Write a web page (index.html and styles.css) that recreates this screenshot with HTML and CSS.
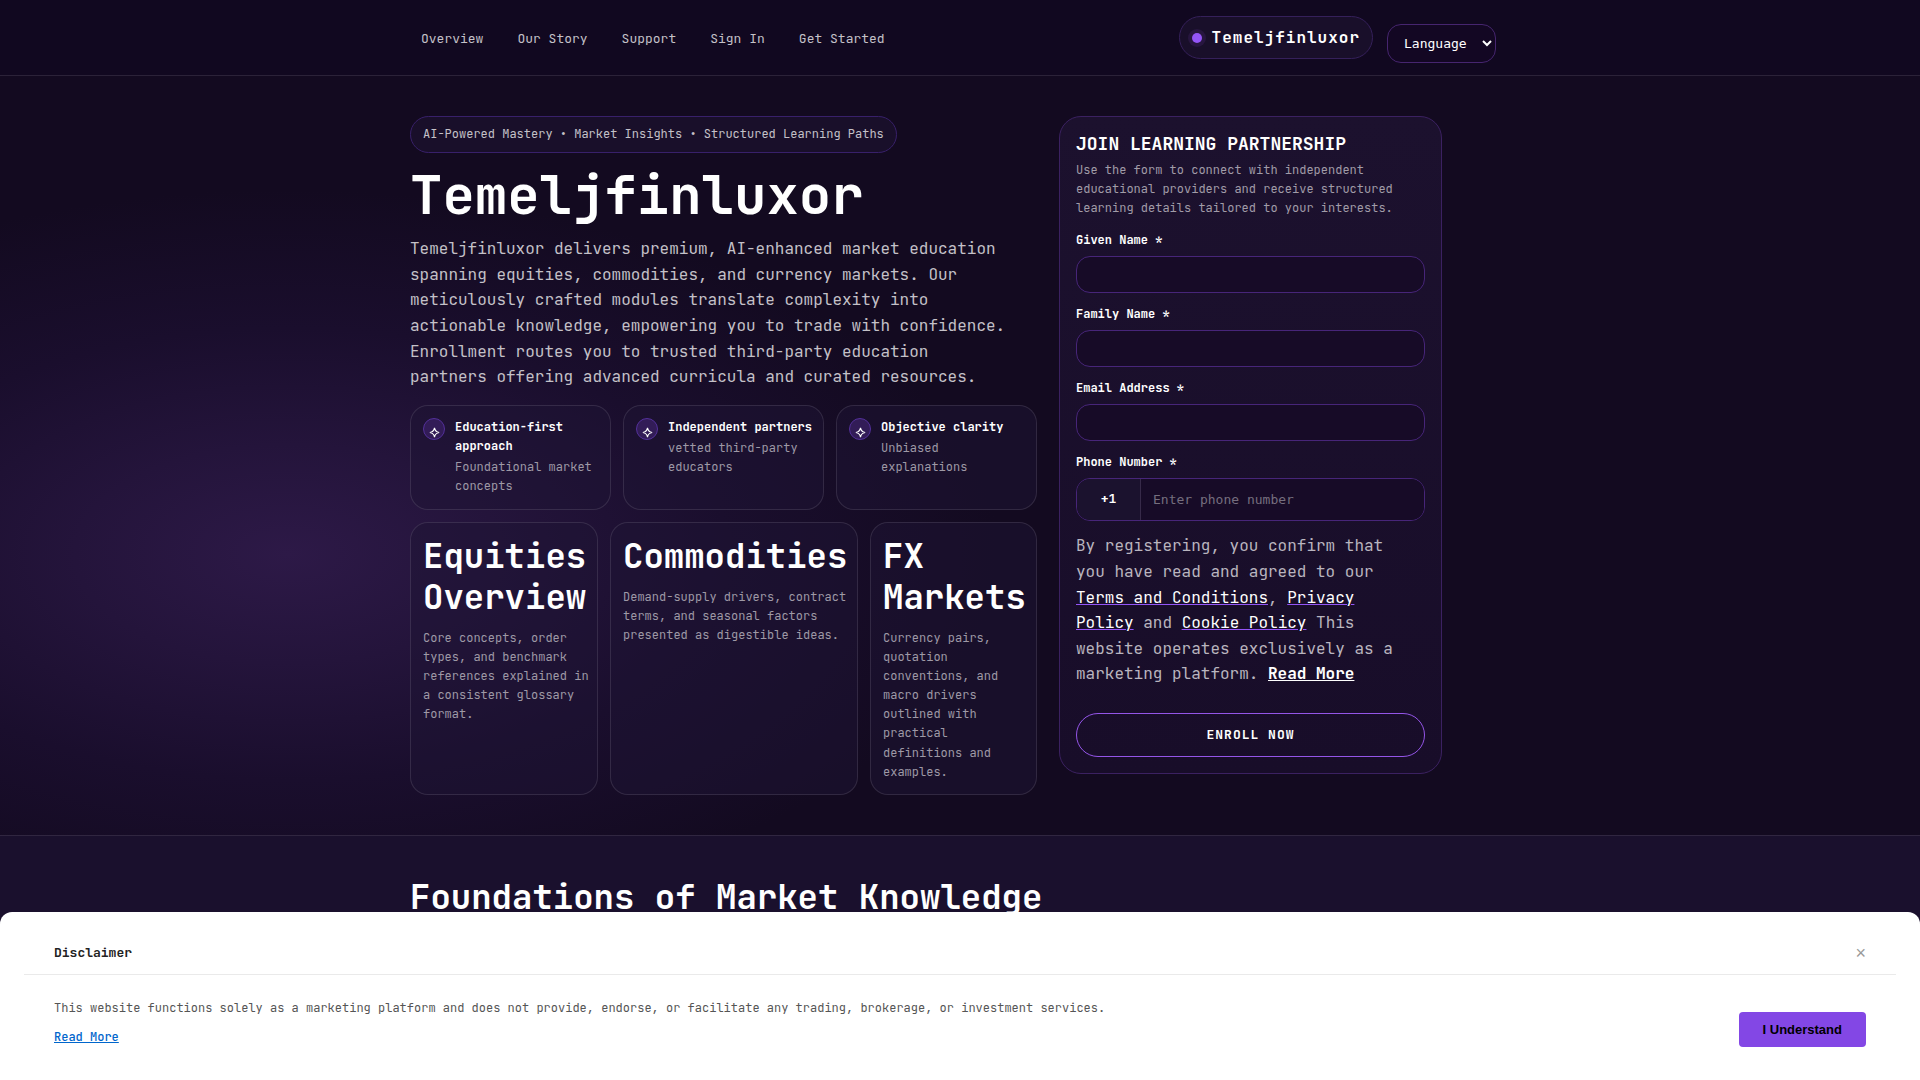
FILE: index.html
```html
<!DOCTYPE html>
<html lang="en">
<head>
<meta charset="utf-8">
<meta name="viewport" content="width=device-width, initial-scale=1">
<title>Temeljfinluxor</title>
<link rel="stylesheet" href="styles.css">
</head>
<body>
<header class="site-header">
  <div class="container header-inner">
    <nav class="nav" aria-label="Main">
      <a href="#overview">Overview</a>
      <a href="#story">Our Story</a>
      <a href="#support">Support</a>
      <a href="#signin">Sign In</a>
      <a href="#start">Get Started</a>
    </nav>
    <div class="header-side">
      <a class="brand" href="#top"><span class="brand-dot"></span>Temeljfinluxor</a>
      <select class="language" aria-label="Language"><option>Language</option></select>
    </div>
  </div>
</header>
<main>
  <section class="hero" id="top">
    <div class="container hero-grid">
      <div class="intro">
        <p class="pill">AI-Powered Mastery • Market Insights • Structured Learning Paths</p>
        <h1>Temeljfinluxor</h1>
        <p class="lead">Temeljfinluxor delivers premium, AI-enhanced market education spanning equities, commodities, and currency markets. Our meticulously crafted modules translate complexity into actionable knowledge, empowering you to trade with confidence. Enrollment routes you to trusted third-party education partners offering advanced curricula and curated resources.</p>
        <div class="cards features">
          <div class="card feature">
            <span class="feature-icon"><svg viewBox="0 0 10 10" aria-hidden="true"><path d="M5 .8Q5.6 4.4 9.2 5Q5.6 5.6 5 9.2Q4.4 5.6 .8 5Q4.4 4.4 5 .8Z"/></svg></span>
            <div><strong>Education-first approach</strong><p>Foundational market concepts</p></div>
          </div>
          <div class="card feature">
            <span class="feature-icon"><svg viewBox="0 0 10 10" aria-hidden="true"><path d="M5 .8Q5.6 4.4 9.2 5Q5.6 5.6 5 9.2Q4.4 5.6 .8 5Q4.4 4.4 5 .8Z"/></svg></span>
            <div><strong>Independent partners</strong><p>vetted third-party educators</p></div>
          </div>
          <div class="card feature">
            <span class="feature-icon"><svg viewBox="0 0 10 10" aria-hidden="true"><path d="M5 .8Q5.6 4.4 9.2 5Q5.6 5.6 5 9.2Q4.4 5.6 .8 5Q4.4 4.4 5 .8Z"/></svg></span>
            <div><strong>Objective clarity</strong><p>Unbiased explanations</p></div>
          </div>
        </div>
        <div class="cards topics">
          <article class="card topic"><h2>Equities Overview</h2><p>Core concepts, order types, and benchmark references explained in a consistent glossary format.</p></article>
          <article class="card topic"><h2>Commodities</h2><p>Demand-supply drivers, contract terms, and seasonal factors presented as digestible ideas.</p></article>
          <article class="card topic"><h2>FX Markets</h2><p>Currency pairs, quotation conventions, and macro drivers outlined with practical definitions and examples.</p></article>
        </div>
      </div>
      <form class="signup">
        <h3>JOIN LEARNING PARTNERSHIP</h3>
        <p class="signup-note">Use the form to connect with independent educational providers and receive structured learning details tailored to your interests.</p>
        <div class="field"><label for="given">Given Name *</label><input id="given" type="text"></div>
        <div class="field"><label for="family">Family Name *</label><input id="family" type="text"></div>
        <div class="field"><label for="email">Email Address *</label><input id="email" type="email"></div>
        <div class="field"><label for="phone">Phone Number *</label>
          <div class="phone"><span class="phone-code">+1</span><input id="phone" type="tel" placeholder="Enter phone number"></div>
        </div>
        <p class="consent">By registering, you confirm that you have read and agreed to our <a href="#terms">Terms and Conditions</a>, <a href="#privacy">Privacy Policy</a> and <a href="#cookies">Cookie Policy</a> This website operates exclusively as a marketing platform. <a class="more" href="#more">Read More</a></p>
        <button class="enroll" type="submit">ENROLL NOW</button>
      </form>
    </div>
  </section>
  <section class="foundations" id="overview">
    <div class="container"><h2>Foundations of Market Knowledge</h2></div>
  </section>
</main>
<aside class="disclaimer" role="dialog" aria-labelledby="disclaimer-title">
  <div class="disclaimer-head">
    <h2 id="disclaimer-title">Disclaimer</h2>
    <button class="close" type="button" aria-label="Close">×</button>
  </div>
  <div class="disclaimer-body">
    <div>
      <p>This website functions solely as a marketing platform and does not provide, endorse, or facilitate any trading, brokerage, or investment services.</p>
      <a href="#more">Read More</a>
    </div>
    <button class="accept" type="button">I Understand</button>
  </div>
</aside>
</body>
</html>
```
FILE: styles.css
```css
* { box-sizing: border-box; }
body {
  margin: 0;
  background: #130a20;
  color: #fff;
  font: 16px/1.6 "JetBrains Mono", "DejaVu Sans Mono", "Liberation Mono", monospace;
}
h1, h2, h3, p { margin: 0; }
h2 { font-size: 34px; line-height: 41px; }
.container { width: 100%; max-width: 1100px; margin: 0 auto; }

.site-header { background: #110820; border-bottom: 1px solid #2b2238; }
.header-inner {
  display: flex;
  align-items: center;
  justify-content: space-between;
  min-height: 75px;
  padding: 16px 14px 12px 11px;
}
.nav { display: flex; flex-wrap: wrap; gap: 34px; }
.nav a { color: #c4c1c8; font-size: 13px; text-decoration: none; }
.header-side { display: flex; align-items: flex-end; gap: 14px; }
.brand {
  display: flex;
  align-items: center;
  gap: 10px;
  margin-bottom: 4px;
  padding: 8px 12px;
  border: 1px solid #35205a;
  border-radius: 22px;
  background: #190f2a;
  color: #fff;
  font-weight: 700;
  line-height: 25px;
  letter-spacing: 1px;
  text-decoration: none;
}
.brand-dot {
  width: 10px;
  height: 10px;
  border-radius: 50%;
  background: #9455f7;
  box-shadow: 0 0 0 4px #27163f;
}
.language {
  height: 39px;
  padding: 0 0 0 12px;
  width: 109px;
  border: 1px solid #46256f;
  border-radius: 14px;
  background: #130723;
  color: #fff;
  font: 13px "DejaVu Sans Mono", monospace;
}

.hero {
  padding: 40px 0;
  background: radial-gradient(ellipse 37% 48% at 15% 63%, #2d1947 0%, #24143b 30%, #1a0e2d 62%, #130a20 100%);
}
.hero-grid {
  display: grid;
  grid-template-columns: minmax(0, 57%) minmax(0, 383px);
  gap: 22px;
  align-items: start;
}
.pill {
  width: fit-content;
  padding: 8px 12px;
  border: 1px solid #38206a;
  border-radius: 20px;
  background: #190f2a;
  color: #c4c1c8;
  font-size: 12px;
}
h1 { margin: 11px 0 10px; font-size: 54px; line-height: 62px; }
.lead { max-width: 600px; color: #c4c1c8; }
.cards { display: grid; gap: 12px; }
.features { grid-template-columns: repeat(3, 1fr); margin-top: 15px; }
.topics {
  grid-template-columns: minmax(0, 188fr) minmax(0, 248fr) minmax(0, 167fr);
  margin-top: 12px;
}
.card {
  padding: 12px 8px 12px 12px;
  border: 1px solid rgba(255, 255, 255, 0.11);
  border-radius: 18px;
  background: rgba(30, 20, 52, 0.5);
  font-size: 12px;
}
.card p { color: #9e99a6; }
.feature { display: flex; gap: 10px; }
.feature strong { display: block; }
.feature p { margin-top: 2px; }
.feature-icon {
  display: grid;
  flex: none;
  place-items: end center;
  width: 22px;
  height: 22px;
  padding-bottom: 1px;
  border: 1px solid #53309a;
  border-radius: 50%;
  background: #321c57;
}
.feature-icon svg {
  width: 11px;
  height: 11px;
  fill: none;
  stroke: #fff;
}
.topic p { margin-top: 12px; }

.signup {
  padding: 16px;
  border: 1px solid #3b2161;
  border-radius: 22px;
  background: linear-gradient(#1c112e, #180d29);
}
.signup h3 { font-size: 18px; line-height: 22px; }
.signup-note { margin-top: 6px; color: #a19ca8; font-size: 12px; }
.field { margin-top: 12px; }
.field label { display: block; margin-bottom: 6px; font-size: 12px; font-weight: 600; }
.field input {
  display: block;
  width: 100%;
  height: 37px;
  padding: 0 12px;
  border: 1px solid #472579;
  border-radius: 14px;
  background: #170b27;
  color: #fff;
  font: 13px "DejaVu Sans Mono", monospace;
}
.field input::placeholder { color: #756e7e; }
.phone {
  display: flex;
  height: 43px;
  overflow: hidden;
  border: 1px solid #472579;
  border-radius: 14px;
}
.phone-code {
  display: grid;
  flex: none;
  place-items: center;
  width: 64px;
  border-right: 1px solid #372a49;
  background: #1b122e;
  font-size: 13px;
  font-weight: 600;
}
.field .phone input { height: 100%; border: 0; border-radius: 0; }
.consent { max-width: 332px; margin-top: 12px; color: #b9b5bf; }
.consent a { color: #fff; text-decoration-color: #9455f7; }
.consent .more { font-weight: 700; text-decoration-color: #fff; }
.enroll {
  display: block;
  width: 100%;
  height: 44px;
  margin-top: 26px;
  border: 1px solid #9455e8;
  border-radius: 22px;
  background: transparent;
  color: #fff;
  font: 600 13px "JetBrains Mono", "DejaVu Sans Mono", monospace;
  letter-spacing: 1px;
}

.foundations {
  min-height: 245px;
  padding: 40px 0;
  border-top: 1px solid #302640;
  background: #1a102d;
}

.disclaimer {
  position: fixed;
  right: 0;
  bottom: 0;
  left: 0;
  padding: 20px 24px 33px;
  border-radius: 12px 12px 0 0;
  background: #fff;
  color: #555;
  font-size: 12px;
}
.disclaimer-head {
  display: flex;
  align-items: center;
  justify-content: space-between;
  padding: 10px 30px;
  border-bottom: 1px solid #eaeaea;
}
.disclaimer-head h2 { color: #222; font-size: 13px; font-weight: 600; line-height: 22px; }
.close {
  padding: 0;
  border: 0;
  background: none;
  color: #999;
  font: 18px/22px "Liberation Sans", sans-serif;
}
.disclaimer-body {
  display: flex;
  align-items: flex-end;
  justify-content: space-between;
  gap: 24px;
  padding: 24px 30px 0;
}
.disclaimer-body a {
  display: inline-block;
  margin-top: 10px;
  color: #0066cc;
  font-weight: 500;
}
.accept {
  height: 35px;
  flex: none;
  padding: 0 24px;
  border: 0;
  border-radius: 4px;
  background: #8347e5;
  color: #000;
  font: 700 13px "Liberation Sans", sans-serif;
}
```
